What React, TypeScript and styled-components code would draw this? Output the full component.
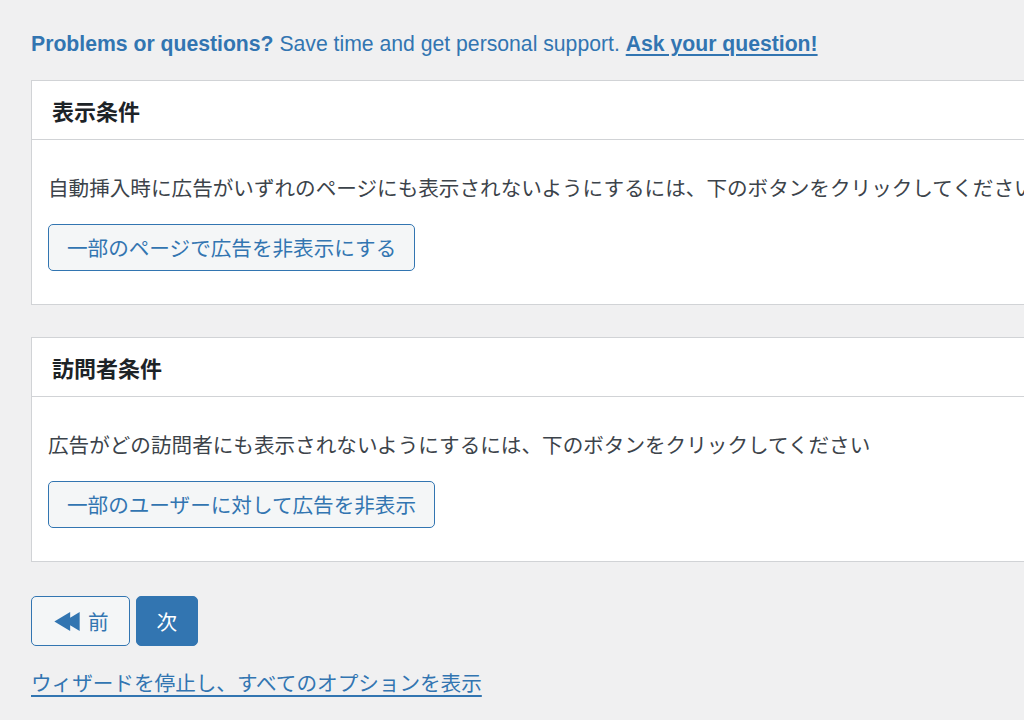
import React from 'react';
import styled, { createGlobalStyle } from 'styled-components';

const GlobalStyle = createGlobalStyle`
  html, body {
    margin: 0;
    padding: 0;
    background: #f0f0f1;
    overflow: hidden;
  }
  body {
    font-family: "Liberation Sans", "Noto Sans CJK JP", sans-serif;
    color: #3c434a;
  }
`;

const Page = styled.div`
  padding: 29px 0 0 31px;
  width: 1100px;
`;

const SupportLine = styled.p`
  margin: 0 0 21px;
  font-size: 21.2px;
  line-height: 30px;
  color: #3275b1;
  white-space: nowrap;

  strong {
    font-weight: 700;
  }

  a {
    color: #3275b1;
    font-weight: 700;
    text-decoration: underline;
    text-underline-offset: 3px;
  }
`;

const Card = styled.section`
  width: 1060px;
  background: #fff;
  border: 1px solid #d1d3d6;
  margin-bottom: 32px;
`;

const CardHeader = styled.h2`
  margin: 0;
  height: 58px;
  display: flex;
  align-items: center;
  padding: 0 20px;
  border-bottom: 1px solid #d1d3d6;
  font-family: "Noto Sans CJK JP", sans-serif;
  font-size: 22px;
  font-weight: 700;
  color: #1d2327;
`;

const CardBody = styled.div`
  padding: 32px 16px 33px;
`;

const CardText = styled.p`
  margin: 0 0 22px;
  font-family: "Noto Sans CJK JP", sans-serif;
  font-size: 20.6px;
  line-height: 30px;
  color: #3c434a;
  white-space: nowrap;
`;

const OutlineButton = styled.button`
  height: 47px;
  padding: 0 18px;
  background: #f4f6f7;
  border: 1px solid #3275b1;
  border-radius: 5px;
  color: #3275b1;
  font-family: "Noto Sans CJK JP", sans-serif;
  font-size: 20.6px;
  line-height: 1;
  cursor: pointer;
`;

const NavRow = styled.div`
  display: flex;
  gap: 6px;
  margin-top: 34px;
`;

const NavButton = styled.button<{ $primary?: boolean }>`
  display: flex;
  align-items: center;
  gap: 8px;
  height: 50px;
  padding: ${({ $primary }) => ($primary ? '0 20px' : '0 20px 0 22px')};
  background: ${({ $primary }) => ($primary ? '#3275b1' : '#f4f6f7')};
  border: 1px solid #3275b1;
  border-radius: 5px;
  color: ${({ $primary }) => ($primary ? '#fff' : '#3275b1')};
  font-family: "Noto Sans CJK JP", sans-serif;
  font-size: 20.6px;
  line-height: 1;
  cursor: pointer;
`;

const StopLink = styled.a`
  display: inline-block;
  margin-top: 21px;
  font-family: "Noto Sans CJK JP", sans-serif;
  font-size: 20.6px;
  line-height: 30px;
  color: #3275b1;
  text-decoration: underline;
  text-underline-offset: 4px;
`;

const BackIcon = () => (
  <svg width="26" height="19" viewBox="2 4 16 12" fill="currentColor" aria-hidden="true">
    <path d="M2 10l10-6v3.6L18 4v12l-6-3.6V16z" />
  </svg>
);

interface ConditionCardProps {
  title: string;
  text: string;
  action: string;
}

const ConditionCard: React.FC<ConditionCardProps> = ({ title, text, action }) => (
  <Card>
    <CardHeader>{title}</CardHeader>
    <CardBody>
      <CardText>{text}</CardText>
      <OutlineButton type="button">{action}</OutlineButton>
    </CardBody>
  </Card>
);

export default function App() {
  return (
    <>
      <GlobalStyle />
      <Page>
        <SupportLine>
          <strong>Problems or questions?</strong> Save time and get personal support.{' '}
          <a href="#">Ask your question!</a>
        </SupportLine>

        <ConditionCard
          title="表示条件"
          text="自動挿入時に広告がいずれのページにも表示されないようにするには、下のボタンをクリックしてください"
          action="一部のページで広告を非表示にする"
        />
        <ConditionCard
          title="訪問者条件"
          text="広告がどの訪問者にも表示されないようにするには、下のボタンをクリックしてください"
          action="一部のユーザーに対して広告を非表示"
        />

        <NavRow>
          <NavButton type="button">
            <BackIcon />
            前
          </NavButton>
          <NavButton type="button" $primary>
            次
          </NavButton>
        </NavRow>

        <StopLink href="#">ウィザードを停止し、すべてのオプションを表示</StopLink>
      </Page>
    </>
  );
}
